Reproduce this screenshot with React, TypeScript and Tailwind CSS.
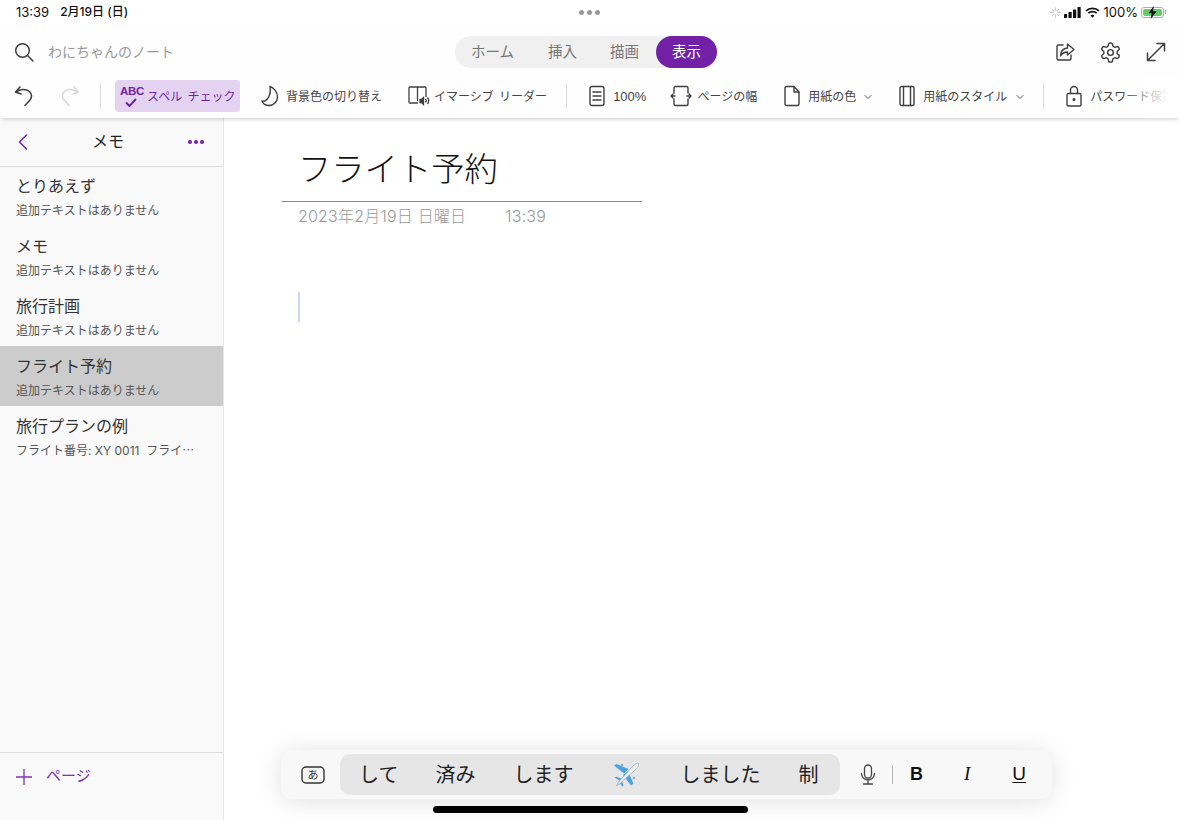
import React from "react";
import { ChevronDown } from "lucide-react";

const purple = "#7220a6";

function Icon({ w = 22, h = 22, box = "0 0 24 24", sw = 1.6, color = "#3f3f3f", children }: any) {
  return (
    <svg width={w} height={h} viewBox={box} fill="none" stroke={color} strokeWidth={sw} strokeLinecap="round" strokeLinejoin="round" className="shrink-0">
      {children}
    </svg>
  );
}

function Divider({ className }: { className: string }) {
  return <div className={`h-[26px] w-px shrink-0 bg-[#dcdcdc] ${className}`}></div>;
}

function Note({ title, sub, active }: { title: string; sub: string; active?: boolean }) {
  return (
    <div className={`flex h-[60px] flex-col pl-4 pr-5 pt-[10px] ${active ? "bg-[#cccccc]" : ""}`}>
      <div className="text-[16px] leading-[22px] text-[#333333]">{title}</div>
      <div className="mt-[4px] whitespace-pre font-['Inter','Noto_Sans_CJK_JP',sans-serif] text-[12px] leading-[18px] text-[#555555]">{sub}</div>
    </div>
  );
}

function Plane() {
  return (
    <svg width="26" height="27" viewBox="0 0 26 27" className="shrink-0">
      <path d="M1 4.500L3.500 3 15.500 8 11 12.500z" fill="#4aa3e0" />
      <path d="M15 10l5.500 12.500-2.500 2L10 14z" fill="#4aa3e0" />
      <path d="M1.500 16.500l2-.8L9.500 18 7.500 20z" fill="#4aa3e0" />
      <path d="M8.500 19l2 5.500-1.500 1L6 20.500z" fill="#4aa3e0" />
      <circle cx="9" cy="4" r="1.300" fill="#9aa3aa" />
      <circle cx="21" cy="17" r="1.300" fill="#9aa3aa" />
      <path d="M25.500 2.500c1 1-.2 3.500-2.200 5.500L7 22.500 3.500 25 5.500 21 20 5c2-2 4.500-3.500 5.500-2.500z" fill="#eceff1" stroke="#98a2a9" strokeWidth=".7" />
    </svg>
  );
}

export default function App() {
  return (
    <div className="relative flex h-[820px] w-[1180px] flex-col overflow-hidden bg-white font-['Liberation_Sans','Noto_Sans_CJK_JP',sans-serif]">
      {/* status bar */}
      <div className="relative flex h-[24px] shrink-0 items-center justify-between pl-4 pr-[14px] font-['Inter','Noto_Sans_CJK_JP',sans-serif] text-[13px] text-[#111111]">
        <div className="flex items-center gap-[11px] leading-none">
          <span>13:39</span>
          <span className="text-[12px] font-medium">2月19日 (日)</span>
        </div>
        <div className="absolute left-[579px] top-[10px] flex gap-[3px]">
          <div className="size-[5px] rounded-full bg-[#9a9a9a]"></div>
          <div className="size-[5px] rounded-full bg-[#9a9a9a]"></div>
          <div className="size-[5px] rounded-full bg-[#9a9a9a]"></div>
        </div>
        <div className="flex items-center">
          <svg width="11" height="11" viewBox="0 0 12 12" stroke="#c4c4c4" strokeWidth="1.2" strokeLinecap="round">
            <path d="M6 1v2.500M6 8.500V11M1 6h2.500M8.500 6H11M2.500 2.500l1.800 1.800M7.700 7.700l1.800 1.800M2.500 9.500l1.800-1.800M7.700 4.300l1.800-1.800" />
          </svg>
          <svg width="17" height="11" viewBox="0 0 17 11" fill="#111111" className="ml-[3px]">
            <rect x="0" y="7" width="3.200" height="4" rx=".6" />
            <rect x="4.500" y="5" width="3.200" height="6" rx=".6" />
            <rect x="9" y="2.500" width="3.200" height="8.500" rx=".6" />
            <rect x="13.500" y="0" width="3.200" height="11" rx=".6" />
          </svg>
          <svg width="15" height="11" viewBox="0 0 15 11" fill="none" stroke="#111111" strokeWidth="1.7" className="ml-[4px]">
            <path d="M1 3.800c3.600-3.300 9.400-3.300 13 0M3.300 6.200c2.300-2.100 6.100-2.100 8.400 0" />
            <path d="M7.500 10.800l-2-2.200c1.100-1 2.900-1 4 0z" fill="#111111" stroke="none" />
          </svg>
          <span className="ml-[4px] leading-none">100%</span>
          <div className="ml-[3px] flex items-center">
            <div className="relative flex h-[11px] w-[23px] items-center rounded-[3px] border border-[#a3b8a3] p-px">
              <div className="h-full w-full rounded-[2px] bg-[#5fd065]"></div>
              <svg width="11" height="13" viewBox="0 0 9 11" className="absolute left-[5px] top-[-2px]">
                <path d="M5.500 0L1 6.200h2.800L3 11l5-6.500H5z" fill="#111111" />
              </svg>
            </div>
            <div className="ml-px h-[4px] w-px bg-[#a3b8a3]"></div>
          </div>
        </div>
      </div>

      {/* title row */}
      <div className="relative flex h-[52px] shrink-0 items-center bg-[#fefefe] pl-[14px] pr-[14px] pt-[4px]">
        <Icon w={20} h={20} box="0 0 20 20" sw={1.5}>
          <circle cx="8.500" cy="8.500" r="6.800" />
          <path d="M13.500 13.500L19 19" />
        </Icon>
        <span className="ml-[14px] text-[14px] text-[#999999]">わにちゃんのノート</span>
        <div className="absolute left-[455px] top-[12px] flex h-[32px] w-[262px] items-center rounded-full bg-[#f0f0f0] text-[14.5px] text-[#777777]">
          <span className="ml-4 mt-[2px]">ホーム</span>
          <span className="ml-[34px] mt-[2px]">挿入</span>
          <span className="ml-[33px] mt-[2px]">描画</span>
          <span className="ml-[17px] flex h-[32px] w-[61px] items-center justify-center rounded-full bg-[#7220a6] pt-[2px] text-white">表示</span>
        </div>
        <div className="ml-auto flex items-center gap-[24px]">
          <Icon w={20} h={20} box="0 0 20 20" sw={1.4}>
            <path d="M8 3H3.500A1.500 1.500 0 0 0 2 4.500v12A1.500 1.500 0 0 0 3.500 18h11a1.500 1.500 0 0 0 1.500-1.500V13" />
            <path d="M12.500 2l6.500 5.500-6.500 5.500V10c-3.500 0-5.500 1.200-7 4 0-4.500 2-7.500 7-8z" />
          </Icon>
          <Icon w={23} h={23} box="0 0 24 24" sw={1.5}>
            <path d="M12.220 2h-.44a2 2 0 0 0-2 2v.18a2 2 0 0 1-1 1.730l-.43.250a2 2 0 0 1-2 0l-.150-.080a2 2 0 0 0-2.730.730l-.220.380a2 2 0 0 0 .730 2.730l.150.100a2 2 0 0 1 1 1.720v.510a2 2 0 0 1-1 1.740l-.150.090a2 2 0 0 0-.730 2.730l.220.380a2 2 0 0 0 2.730.730l.150-.080a2 2 0 0 1 2 0l.430.250a2 2 0 0 1 1 1.730V20a2 2 0 0 0 2 2h.440a2 2 0 0 0 2-2v-.180a2 2 0 0 1 1-1.730l.430-.250a2 2 0 0 1 2 0l.150.080a2 2 0 0 0 2.730-.730l.220-.390a2 2 0 0 0-.730-2.730l-.150-.080a2 2 0 0 1-1-1.740v-.500a2 2 0 0 1 1-1.740l.150-.090a2 2 0 0 0 .730-2.730l-.220-.380a2 2 0 0 0-2.730-.730l-.150.080a2 2 0 0 1-2 0l-.430-.250a2 2 0 0 1-1-1.730V4a2 2 0 0 0-2-2z" />
            <circle cx="12" cy="12" r="3" />
          </Icon>
          <Icon w={20} h={20} box="0 0 20 20" sw={1.5}>
            <path d="M1.500 18.500L18.500 1.500M11 1.500h7.500V9M1.500 11v7.500H9" />
          </Icon>
        </div>
      </div>

      {/* toolbar */}
      <div className="relative z-10 flex h-[42px] shrink-0 items-center overflow-hidden whitespace-nowrap bg-[#fefefe] pb-[2px] pl-[14px] text-[12px] text-[#444444] shadow-[0_3px_4px_-2px_rgba(0,0,0,0.2)] [word-spacing:2px] [&>span]:mt-[2px]">
        <Icon w={22} h={22} box="0 0 22 22" sw={1.6}>
          <path d="M6 2L1.500 7 7 9" />
          <path d="M2 7c4-3 10-3.500 13.500-.5 3 2.700 2.500 6.500 0 9L11 20.500" />
        </Icon>
        <div className="ml-[22px]">
          <Icon w={22} h={22} box="0 0 22 22" sw={1.6} color="#d8d8d8">
            <path d="M16 2l4.500 5L15 9" />
            <path d="M20 7c-4-3-10-3.500-13.500-.5-3 2.700-2.500 6.500 0 9l4.500 5" />
          </Icon>
        </div>
        <Divider className="ml-[20px]" />
        <div className="ml-[14px] flex h-[32px] w-[125px] items-center rounded-[4px] bg-[#e4d3f0] pl-[5px] text-[#6f24a3]">
          <div className="relative h-[24px] w-[22px] shrink-0">
            <span className="absolute left-0 top-0 font-['Liberation_Sans',sans-serif] text-[11.500px] font-bold leading-[14px] tracking-[-0.3px]">ABC</span>
            <svg width="12" height="9" viewBox="0 0 12 9" fill="none" stroke="#6f24a3" strokeWidth="2" className="absolute left-[5px] top-[14px]">
              <path d="M1 4.500L4.500 8 11 1" />
            </svg>
          </div>
          <span className="ml-[5px] mt-[2px]">スペル チェック</span>
        </div>
        <div className="ml-[20px]">
          <Icon w={20} h={22} box="0 0 20 22" sw={1.4}>
            <path d="M10 1.500c3.500 1 7.500 5 7.500 10.500A8.500 8.500 0 0 1 9 20.500c-3.500 0-6-1.800-7-4.500 5 1 9.500-6 8-14.500z" />
          </Icon>
        </div>
        <span className="ml-[6px]">背景色の切り替え</span>
        <div className="ml-[26px]">
          <svg width="23" height="22" viewBox="0 0 23 22" fill="none" stroke="#3f3f3f" strokeWidth="1.300" className="shrink-0">
            <path d="M10 18H2a1 1 0 0 1-1-1V3a1 1 0 0 1 1-1h7.500v14M10 2h7a1 1 0 0 1 1 1v9" />
            <path d="M12 14.500h1.500l2-2v7l-2-2H12z" fill="#3f3f3f" />
            <path d="M17.500 14c.8 1 .8 2.500 0 3.500M19.500 12.500c1.500 2 1.500 4.500 0 6.500" />
          </svg>
        </div>
        <span className="ml-[3px]">イマーシブ リーダー</span>
        <Divider className="ml-[19px]" />
        <div className="ml-[22px]">
          <Icon w={16} h={22} box="0 0 16 22" sw={1.4}>
            <rect x="1" y="1.500" width="14" height="19" rx="2" />
            <path d="M4 7h8M4 11h8M4 15h8" />
          </Icon>
        </div>
        <span className="ml-[8px] text-[13px]">100%</span>
        <div className="ml-[24px]">
          <Icon w={22} h={22} box="0 0 22 22" sw={1.400}>
            <path d="M4 8V3a1.500 1.500 0 0 1 1.500-1.500h11A1.500 1.500 0 0 1 18 3v5M4 14v5a1.500 1.500 0 0 0 1.500 1.500h11A1.500 1.500 0 0 0 18 19v-5" />
            <path d="M1 11h4M3 9l-2 2 2 2M17 11h4M19 9l2 2-2 2" />
          </Icon>
        </div>
        <span className="ml-[5px]">ページの幅</span>
        <div className="ml-[27px]">
          <Icon w={16} h={22} box="0 0 16 22" sw={1.400}>
            <path d="M1 3a1.500 1.500 0 0 1 1.500-1.500H10L15 7v12a1.500 1.500 0 0 1-1.500 1.500h-11A1.500 1.500 0 0 1 1 19z" />
            <path d="M10 1.500V7h5" />
          </Icon>
        </div>
        <span className="ml-[8px]">用紙の色</span>
        <ChevronDown size={12} className="ml-[6px] mt-[2px] shrink-0" strokeWidth={1.8} />
        <div className="ml-[25px]">
          <Icon w={16} h={22} box="0 0 16 22" sw={1.400}>
            <rect x="1" y="1.500" width="14" height="19" rx="1.500" />
            <path d="M4.500 1.500v19M11.500 1.500v19M4.500 7v3M11.500 7v3" />
          </Icon>
        </div>
        <span className="ml-[8px]">用紙のスタイル</span>
        <ChevronDown size={12} className="ml-[7px] mt-[2px] shrink-0" strokeWidth={1.8} />
        <Divider className="ml-[17px]" />
        <div className="ml-[22px]">
          <Icon w={16} h={22} box="0 0 16 22" sw={1.400}>
            <rect x="1" y="8.500" width="14" height="12.500" rx="1.500" />
            <path d="M4.500 8.500V5a3.500 3.500 0 0 1 7 0v3.500" />
            <circle cx="8" cy="14.500" r=".8" fill="#3f3f3f" />
          </Icon>
        </div>
        <span className="ml-[8px]">パスワード保護</span>
        <div className="absolute right-0 top-0 h-full w-[60px] bg-gradient-to-r from-transparent to-white to-80%"></div>
      </div>

      {/* body */}
      <div className="relative flex min-h-0 flex-1">
        <div className="flex w-[224px] shrink-0 flex-col border-r border-[#e6e6e6] bg-[#f9f9f9]">
          <div className="flex h-[49px] shrink-0 items-center justify-between border-b border-[#dddddd] pl-[18px] pr-[19px]">
            <svg width="10" height="16" viewBox="0 0 10 16" fill="none" stroke={purple} strokeWidth="1.500" strokeLinecap="round" strokeLinejoin="round">
              <path d="M8.500 1L1.500 8l7 7" />
            </svg>
            <span className="text-[16px] text-[#222222]">メモ</span>
            <div className="flex gap-[2px]">
              <div className="size-[4px] rounded-full bg-[#7220a6]"></div>
              <div className="size-[4px] rounded-full bg-[#7220a6]"></div>
              <div className="size-[4px] rounded-full bg-[#7220a6]"></div>
            </div>
          </div>
          <div className="-mt-px flex-1">
            <Note title="とりあえず" sub="追加テキストはありません" />
            <Note title="メモ" sub="追加テキストはありません" />
            <Note title="旅行計画" sub="追加テキストはありません" />
            <Note title="フライト予約" sub="追加テキストはありません" active />
            <Note title="旅行プランの例" sub="フライト番号: XY 0011  フライ⋯" />
          </div>
          <div className="flex h-[68px] shrink-0 border-t border-[#dddddd] pl-4 pt-[13px] text-[15px] leading-[20px] text-[#7b35ad]">
            <svg width="16" height="16" viewBox="0 0 16 16" stroke="#7b35ad" strokeWidth="1.300" className="mt-[3px]">
              <path d="M0 8h16M8 0v16" />
            </svg>
            <span className="ml-[14px]">ページ</span>
          </div>
        </div>

        <div className="flex-1 bg-white pl-[58px] pt-[27px]">
          <div className="w-[360px] border-b border-[#888888] pb-[6px] pl-4 text-[33.300px] font-light leading-[50px] text-[#111111]">
            フライト予約
          </div>
          <div className="mt-[2px] flex pl-4 font-['Inter','Noto_Sans_CJK_JP',sans-serif] text-[16px] font-light leading-[24px] tracking-[0.2px] text-[#999999]">
            <span>2023年2月19日 日曜日</span>
            <span className="ml-[39px]">13:39</span>
          </div>
          <div className="ml-4 mt-[64px] h-[30px] w-[2px] bg-[#cdd6f4]"></div>
        </div>
      </div>

      {/* floating keyboard bar */}
      <div className="absolute left-[281px] top-[750px] flex h-[49px] w-[771px] items-center rounded-[10px] bg-[#f8f8f8] shadow-[0_2px_24px_rgba(0,0,0,0.12)]">
        <svg width="24" height="18" viewBox="0 0 24 18" className="ml-[20px] shrink-0">
          <rect x="1" y="1" width="22" height="16" rx="4" fill="none" stroke="#333333" strokeWidth="1.400" />
          <text x="12" y="13" fontSize="11" textAnchor="middle" fill="#333333">あ</text>
        </svg>
        <div className="ml-[15px] flex h-[41px] w-[500px] items-center rounded-[10px] bg-[#e6e6e6] pl-[19px] text-[20px] text-[#222222]">
          <span>して</span>
          <span className="ml-[37px]">済み</span>
          <span className="ml-[38px]">します</span>
          <span className="ml-[40px]"><Plane /></span>
          <span className="ml-[41px]">しました</span>
          <span className="ml-[38px]">制</span>
        </div>
        <svg width="16" height="21" viewBox="0 0 16 21" fill="none" stroke="#444444" strokeWidth="1.300" strokeLinecap="round" className="ml-[20px] shrink-0">
          <rect x="4.500" y="1" width="7" height="13" rx="3.500" />
          <path d="M1.500 9.500c0 3.500 2.700 6.500 6.500 6.500s6.500-3 6.500-6.500M8 16v4M3.500 20h9" />
        </svg>
        <div className="ml-[16px] h-[19px] w-px bg-[#b5b5b5]"></div>
        <span className="ml-[17px] text-[18px] font-bold text-[#111111]">B</span>
        <span className="ml-[41px] font-['Liberation_Serif',serif] text-[19px] italic text-[#111111]">I</span>
        <span className="ml-[42px] text-[19px] text-[#111111] underline underline-offset-2">U</span>
      </div>

      {/* home indicator */}
      <div className="absolute left-[433px] top-[806px] h-[7px] w-[315px] rounded-full bg-black"></div>
    </div>
  );
}
